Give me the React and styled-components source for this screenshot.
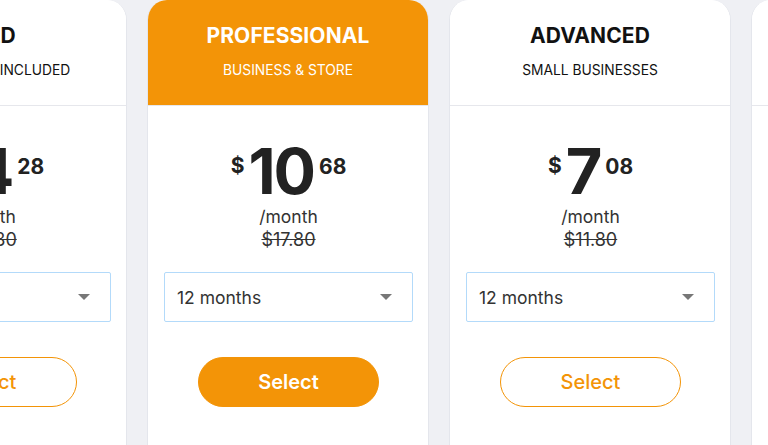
import React from 'react';
import styled, { createGlobalStyle } from 'styled-components';

const GlobalStyle = createGlobalStyle`
  html, body {
    margin: 0;
    padding: 0;
    background: #eff0f4;
    font-family: Inter, "Noto Sans", sans-serif;
    overflow: hidden;
  }
`;

const Page = styled.div`
  width: 768px;
  height: 445px;
  overflow: hidden;
  background: #eff0f4;
`;

// carousel track, scrolled so the first plan is half out of view
const Track = styled.div`
  display: flex;
  gap: 20px;
  margin-left: -155px;
`;

const Card = styled.div`
  flex: 0 0 282px;
  height: 470px;
  box-sizing: border-box;
  background: #fff;
  border: 1px solid #e4e6ec;
  border-top: none;
  border-radius: 20px 20px 0 0;
  overflow: hidden;
  display: flex;
  flex-direction: column;
`;

const Header = styled.div`
  height: 106px;
  box-sizing: border-box;
  border-bottom: 1px solid #e6e7ec;
  background: ${(p) => (p.featured ? '#f39407' : '#fff')};
  color: ${(p) => (p.featured ? '#fff' : '#111')};
  display: flex;
  flex-direction: column;
  align-items: center;
  padding-top: 23px;
`;

const Title = styled.div`
  font-size: 21px;
  font-weight: 700;
  line-height: 26px;
  letter-spacing: 0.1px;
`;

const Subtitle = styled.div`
  font-size: 13.8px;
  font-weight: 400;
  line-height: 18px;
  margin-top: 12px;
`;

const Body = styled.div`
  display: flex;
  flex-direction: column;
  align-items: center;
  padding: 0 15px 0 16px;
`;

const Price = styled.div`
  display: flex;
  align-items: flex-start;
  color: #222;
  font-weight: 700;
  margin-top: 36px;
  height: 58px;
`;

const Currency = styled.span`
  font-size: 21px;
  line-height: 21px;
  margin-top: 13px;
  margin-right: 4px;
`;

const Whole = styled.span`
  font-size: 63px;
  line-height: 58px;
  letter-spacing: -2px;
`;

const Cents = styled.span`
  font-size: 21px;
  line-height: 21px;
  margin-top: 14px;
  margin-left: 5px;
`;

const Per = styled.div`
  font-size: 17.5px;
  line-height: 16px;
  color: #333;
  margin-top: 9px;
`;

const OldPrice = styled.div`
  font-size: 18px;
  line-height: 24px;
  color: #333;
  margin-top: 3px;
  text-decoration: line-through;
`;

const SelectBox = styled.div`
  align-self: stretch;
  height: 50px;
  box-sizing: border-box;
  margin-top: 20px;
  border: 1px solid #b3dafa;
  border-radius: 2px;
  display: flex;
  align-items: center;
  justify-content: space-between;
  padding: 0 20px 0 12px;
  font-size: 17.5px;
  color: #333;
`;

const Caret = styled.span`
  width: 0;
  height: 0;
  border-left: 6px solid transparent;
  border-right: 6px solid transparent;
  border-top: 6px solid #777;
`;

const SelectButton = styled.button`
  width: 181px;
  height: 50px;
  margin-top: 35px;
  border-radius: 25px;
  font-family: Inter, "Noto Sans", sans-serif;
  font-size: 20px;
  font-weight: ${(p) => (p.featured ? 600 : 500)};
  border: 1px solid #f39407;
  background: ${(p) => (p.featured ? '#f39407' : '#fff')};
  color: ${(p) => (p.featured ? '#fff' : '#f39407')};
  cursor: pointer;
`;

const plans = [
  { title: 'GOLD', sub: 'FREE DOMAIN INCLUDED', whole: '14', cents: '28', old: '$23.80' },
  { title: 'PROFESSIONAL', sub: 'BUSINESS & STORE', whole: '10', cents: '68', old: '$17.80', featured: true },
  { title: 'ADVANCED', sub: 'SMALL BUSINESSES', whole: '7', cents: '08', old: '$11.80' },
  { title: 'STARTER', sub: 'PERSONAL SITES', whole: '3', cents: '48', old: '$5.80' },
];

export default function App() {
  return (
    <Page>
      <GlobalStyle />
      <Track>
        {plans.map((p) => (
          <Card key={p.title}>
            <Header featured={p.featured}>
              <Title>{p.title}</Title>
              <Subtitle>{p.sub}</Subtitle>
            </Header>
            <Body>
              <Price>
                <Currency>$</Currency>
                <Whole>{p.whole}</Whole>
                <Cents>{p.cents}</Cents>
              </Price>
              <Per>/month</Per>
              <OldPrice>{p.old}</OldPrice>
              <SelectBox>
                <span>12 months</span>
                <Caret />
              </SelectBox>
              <SelectButton featured={p.featured}>Select</SelectButton>
            </Body>
          </Card>
        ))}
      </Track>
    </Page>
  );
}
